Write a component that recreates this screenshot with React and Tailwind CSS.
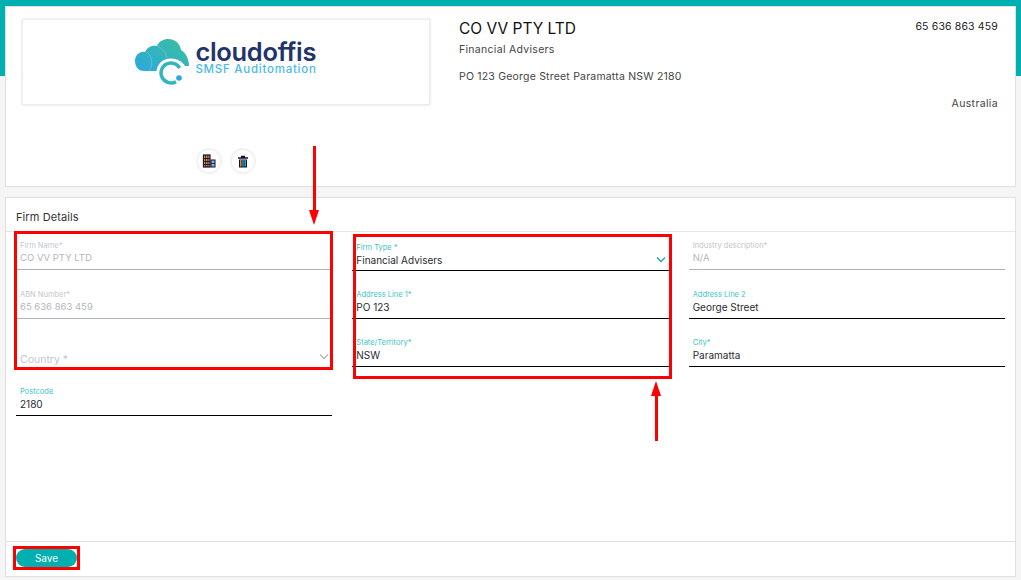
const Field = ({ label, value, disabled, select, placeholder }) => {
  const labelColor = disabled ? "text-[#c4c6cc]" : "text-[#3cc4c4]";
  const textColor = disabled ? "text-[9.5px] text-[#b4b6bc]" : "text-[10px] text-[#2b2b33]";
  const lineColor = disabled ? "border-[#aeb2bc]" : "border-black";
  const spacing = placeholder ? "-mb-[1px] pb-0" : select ? "-mb-[1px] pb-[3px]" : "pb-[4px]";
  return (
    <div className={`relative flex flex-col justify-end border-b pl-[4px] ${spacing} ${lineColor}`}>
      {label && <span className={`text-[7.5px] leading-[10px] ${labelColor}`}>{label}</span>}
      {placeholder && <span className="text-[10.5px] leading-[14px] text-[#c4c6cc]">{placeholder}</span>}
      {value && <span className={`leading-[14px] ${textColor}`}>{value}</span>}
      {select && (
        <svg className="absolute right-[3px] bottom-[7px]" width="10" height="7" viewBox="0 0 10 7" fill="none" stroke={disabled ? "#b4b6bc" : "#1aa6a6"} strokeWidth="1.3">
          <path d="M1 1.5 L5 5.5 L9 1.5" />
        </svg>
      )}
    </div>
  );
};

const Logo = () => (
  <div className="flex items-center gap-[5px]">
    <svg width="55" height="46" viewBox="0 0 55 46">
      <defs>
        <linearGradient id="cloudFill" x1="0" y1="1" x2="1" y2="0">
          <stop offset="0" stopColor="#2ba8e0" />
          <stop offset="1" stopColor="#3dbf9a" />
        </linearGradient>
      </defs>
      <path d="M9 32 C3 32 0 27 0 22 C0 16 5 12 10 13 C13 7 18 6 22 7 C24 2 29 0 33 0 C41 0 45 5 46 11 C51 14 54 20 54 27 L50 27 C48 23 42 19.5 36 19.5 C27 19.5 22 26 21.5 32 Z" fill="url(#cloudFill)" />
      <path d="M12 13 C18 18 18 27 14 32 M22 7 C27 9 31 14 32 19" fill="none" stroke="#fff" strokeOpacity="0.25" strokeWidth="0.8" />
      <path d="M41 42.7 A10 10 0 1 1 44.7 29" fill="none" stroke="#2fb6bf" strokeWidth="3.5" />
      <circle cx="44" cy="39" r="2.8" fill="#2ba8e0" />
    </svg>
    <div className="mb-[8px] flex flex-col">
      <span className="text-[25.5px] leading-[22px] font-semibold tracking-[-0.3px] text-[#22336b]">cloudoffis</span>
      <span className="text-[11.5px] leading-[13px] font-medium tracking-[0.75px] text-[#4db9ea]">SMSF Auditomation</span>
    </div>
  </div>
);

const BuildingIcon = () => (
  <svg width="14" height="14" viewBox="0 0 14 14">
    <rect x="1.5" y="1" width="6.5" height="12" fill="#e8a33d" stroke="#111133" strokeWidth="1.2" />
    <path d="M3.7 1 V13 M5.9 1 V13 M1 4.5 H8 M1 7.5 H8 M1 10.5 H8" stroke="#111133" strokeWidth="0.9" />
    <rect x="9" y="6" width="4" height="7" fill="#7fb5e6" stroke="#111133" strokeWidth="1" />
    <path d="M9 9.5 H13" stroke="#111133" strokeWidth="0.8" />
  </svg>
);

const TrashIcon = () => (
  <svg width="12" height="13" viewBox="0 0 12 13">
    <path d="M4 1.5 H8 M1 3 H11" stroke="#111133" strokeWidth="1.4" />
    <rect x="2" y="4.5" width="8" height="8" fill="#111133" />
    <path d="M3.8 5 V11.5" stroke="#f0a030" strokeWidth="1.3" />
    <path d="M6 5 V11.5" stroke="#3d9cf0" strokeWidth="1.3" />
    <path d="M8.2 5 V11.5" stroke="#35c4cc" strokeWidth="1.3" />
  </svg>
);

const RoundButton = ({ children }) => (
  <button className="flex h-[26px] w-[26px] items-center justify-center rounded-full border-2 border-[#f2f2f2] bg-white">
    {children}
  </button>
);

export default function App() {
  return (
    <div
      className="relative h-[580px] overflow-hidden bg-[linear-gradient(#00b0b0_76px,#f5f5f5_76px)] px-[5px] pt-[6px] text-[#333] [font-family:Inter,'Liberation_Sans',sans-serif]"
    >
      {/* company header */}
      <div className="flex h-[181px] border border-[#e0e0e0] bg-white">
        <div className="flex w-[424px] shrink-0 flex-col items-center pl-[16px] pt-[12px]">
          <div className="flex h-[86px] w-[408px] items-center justify-center border border-[#ececec] shadow-[0_0_3px_rgba(0,0,0,0.12)]">
            <Logo />
          </div>
          <div className="mt-[43px] flex gap-[8px]">
            <RoundButton><BuildingIcon /></RoundButton>
            <RoundButton><TrashIcon /></RoundButton>
          </div>
        </div>
        <div className="ml-[29px] flex flex-1 flex-col pr-[17px] pt-[11px]">
          <div className="flex items-start justify-between">
            <span className="text-[15.5px] leading-[22px] text-[#111]">CO VV PTY LTD</span>
            <span className="text-[10.5px] leading-[18px] tracking-[0.15px] text-[#222]">65 636 863 459</span>
          </div>
          <div className="mt-[3px] text-[10.5px] leading-[14px] tracking-[0.3px] text-[#444]">Financial Advisers</div>
          <div className="mt-[13px] text-[10.5px] leading-[14px] tracking-[0.2px] text-[#444]">PO 123 George Street Paramatta NSW 2180</div>
          <div className="mt-[13px] text-right text-[10.5px] leading-[14px] tracking-[0.35px] text-[#444]">Australia</div>
        </div>
      </div>

      {/* firm details */}
      <div className="mt-[10px] flex h-[380px] flex-col border border-[#e0e0e0] bg-white">
        <div className="flex h-[34px] shrink-0 items-center border-b border-[#e6e6e6] pl-[10px] pt-[6px] text-[11px] tracking-[0.1px] text-[#333]">
          Firm Details
        </div>
        <div className="grid flex-1 grid-cols-3 grid-rows-[38px_49px_48px_49px] content-start gap-x-[20px] pl-[10px] pr-[10px]">
          <Field label="Firm Name*" value="CO VV PTY LTD" disabled />
          <Field label="Firm Type *" value="Financial Advisers" select />
          <Field label="Industry description*" value="N/A" disabled />
          <Field label="ABN Number*" value="65 636 863 459" disabled />
          <Field label="Address Line 1*" value="PO 123" />
          <Field label="Address Line 2" value="George Street" />
          <Field placeholder="Country *" disabled select />
          <Field label="State/Territory*" value="NSW" />
          <Field label="City*" value="Paramatta" />
          <Field label="Postcode" value="2180" />
        </div>
        <div className="flex h-[35px] shrink-0 items-start border-t border-[#e0e0e0] pl-[10px] pt-[7px]">
          <button className="flex h-[18px] w-[61px] items-center justify-center rounded-full bg-[#00b0b0] pt-[1px] text-[10px] text-white">
            Save
          </button>
        </div>
      </div>

      {/* annotations drawn over the page */}
      <div className="absolute left-[14px] top-[231px] h-[139px] w-[319px] border-[3px] border-[#ff0000]" />
      <div className="absolute left-[353px] top-[234px] h-[145px] w-[319px] border-[3px] border-[#ff0000]" />
      <div className="absolute left-[13px] top-[546px] h-[24px] w-[67px] border-[3px] border-[#ff0000]" />
      <svg className="absolute left-[307px] top-[146px]" width="14" height="80" viewBox="0 0 14 80" fill="#ff0000">
        <rect x="6" y="0" width="3" height="66" />
        <path d="M2 64 H12 L7 79 Z" />
      </svg>
      <svg className="absolute left-[649px] top-[381px]" width="14" height="60" viewBox="0 0 14 60" fill="#ff0000">
        <path d="M2 15 H12 L7 0 Z" />
        <rect x="6" y="13" width="3" height="47" />
      </svg>
    </div>
  );
}
